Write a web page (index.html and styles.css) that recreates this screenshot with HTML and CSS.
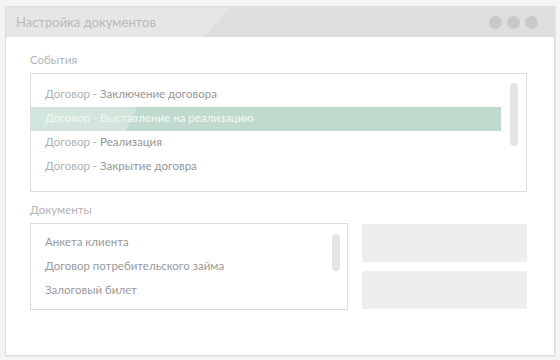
FILE: index.html
```html
<!DOCTYPE html>
<html lang="ru">
<head>
<meta charset="utf-8">
<title>Настройка документов</title>
<link rel="stylesheet" href="styles.css">
</head>
<body>
<div class="window">
  <div class="titlebar">
    <span class="title">Настройка документов</span>
    <span class="dots"><i></i><i></i><i></i></span>
  </div>
  <div class="content">
    <div class="label label-events">События</div>
    <div class="box events">
      <ul class="list">
        <li><span class="pre">Договор - </span>Заключение договора</li>
        <li class="selected"><span>Договор - Выставление на реализацию</span></li>
        <li><span class="pre">Договор - </span>Реализация</li>
        <li><span class="pre">Договор - </span>Закрытие договра</li>
      </ul>
      <div class="scroll scroll-events"></div>
    </div>
    <div class="label label-docs">Документы</div>
    <div class="docs-row">
      <div class="box docs">
        <ul class="list list-docs">
          <li>Анкета клиента</li>
          <li>Договор потребительского займа</li>
          <li>Залоговый билет</li>
        </ul>
        <div class="scroll scroll-docs"></div>
      </div>
      <div class="side">
        <div class="block"></div>
        <div class="block"></div>
      </div>
    </div>
  </div>
</div>
</body>
</html>
```
FILE: styles.css
```css
* { box-sizing: border-box; }
html, body { margin: 0; padding: 0; }
body {
  background: #f4f4f4;
  font-family: Lato, "Open Sans", "Noto Sans", sans-serif;
  width: 560px;
  height: 360px;
  overflow: hidden;
}
.window {
  margin: 6px 0 0 5px;
  width: 550px;
  height: 350px;
  background: #fff;
  border: 1px solid #dcdcdc;
  box-shadow: 1px 1px 0 #e8e8e8;
  display: flex;
  flex-direction: column;
}
.titlebar {
  position: relative;
  height: 30px;
  flex: none;
  background: #dedede;
  display: flex;
  align-items: center;
  justify-content: space-between;
  padding: 0 16px 0 10px;
}
.titlebar::before {
  content: "";
  position: absolute;
  left: 0; top: 0; right: 0; bottom: 0;
  background: #e6e6e6;
  clip-path: polygon(0 0, 225px 0, 197px 100%, 0 100%);
}
.title {
  position: relative;
  font-size: 13px;
  color: #b9b9b9;
}
.dots {
  position: relative;
  display: flex;
  gap: 5px;
}
.dots i {
  width: 13px;
  height: 13px;
  border-radius: 50%;
  background: #c9c9c9;
}
.content {
  padding: 16px 27px 0 24px;
}
.label {
  font-size: 11.5px;
  line-height: 14px;
  color: #b3b3b3;
}
.label-events { margin-bottom: 6px; }
.label-docs { margin-top: 11px; margin-bottom: 6px; }
.box {
  position: relative;
  border: 1px solid #dcdcdc;
  background: #fff;
}
.events {
  height: 119px;
  padding: 9px 25px 0 0;
}
.list {
  list-style: none;
  margin: 0;
  padding: 0;
}
.list li {
  position: relative;
  height: 24px;
  line-height: 21px;
  padding-left: 14px;
  font-size: 11.5px;
  color: #969696;
  white-space: nowrap;
}
.list .pre { color: #b0b0b0; }
.list li.selected {
  background: #c0dace;
  color: #f4f9f6;
  line-height: 22px;
}
.list li.selected::before {
  content: "";
  position: absolute;
  left: 0; top: 0; bottom: 0; right: 0;
  background: #d2e5dc;
  clip-path: polygon(0 0, 106px 0, 95px 100%, 0 100%);
}
.list li.selected span { position: relative; }
.scroll {
  position: absolute;
  width: 8px;
  border-radius: 4px;
  background: #e4e4e4;
}
.scroll-events { right: 8px; top: 9px; height: 63px; }
.docs-row {
  display: flex;
  gap: 14px;
}
.docs {
  width: 318px;
  height: 87px;
  padding-top: 7px;
}
.list-docs li { color: #9a9a9a; }
.scroll-docs { right: 7px; top: 10px; height: 37px; }
.side {
  flex: 1;
  display: flex;
  flex-direction: column;
  gap: 9px;
  padding-top: 1px;
}
.block {
  height: 38px;
  background: #eeeeee;
  border-radius: 2px;
}
```
